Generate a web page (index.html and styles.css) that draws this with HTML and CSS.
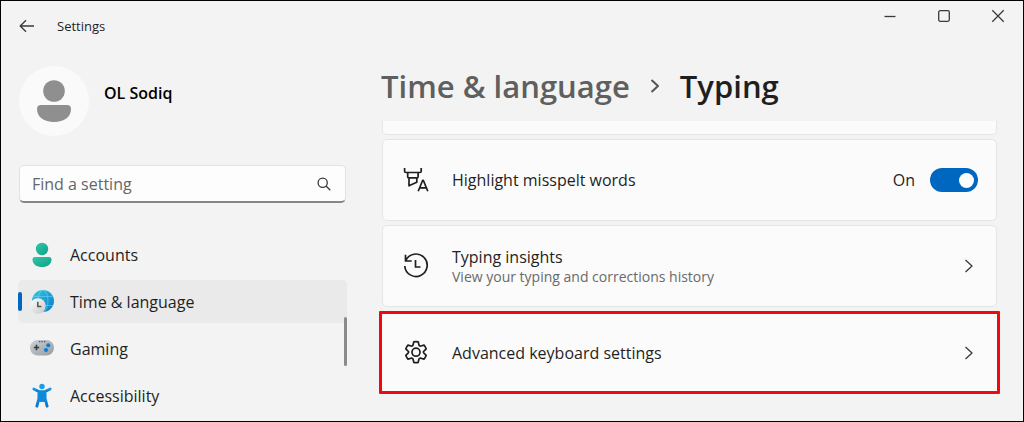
FILE: index.html
```html
<!DOCTYPE html>
<html lang="en">
<head>
<meta charset="utf-8">
<meta name="viewport" content="width=device-width, initial-scale=1">
<title>Settings</title>
<link rel="stylesheet" href="styles.css">
</head>
<body>
<div class="window">
  <header class="titlebar">
    <button class="icon-button back" aria-label="Back">
      <svg width="16" height="14" viewBox="0 0 16 14" class="line"><path d="M15 7H1.500M7 1.200 1.200 7 7 12.800"/></svg>
    </button>
    <span class="app-name">Settings</span>
    <div class="window-controls">
      <button class="icon-button" aria-label="Minimise"><svg width="14" height="14" viewBox="0 0 14 14" class="line"><path d="M1.500 7.500h11"/></svg></button>
      <button class="icon-button" aria-label="Maximise"><svg width="14" height="14" viewBox="0 0 14 14" class="line"><rect x="1.700" y="1.700" width="10.600" height="10.600" rx="1.500"/></svg></button>
      <button class="icon-button" aria-label="Close"><svg width="14" height="14" viewBox="0 0 14 14" class="line"><path d="m1.300 1.300 11.400 11.400M12.700 1.300 1.300 12.700"/></svg></button>
    </div>
  </header>

  <div class="body">
    <aside class="sidebar">
      <div class="profile">
        <span class="avatar">
          <svg width="34" height="42" viewBox="0 0 34 42" fill="#8f8f8f"><circle cx="17" cy="11" r="10.800"/><path d="M4 25h26q4 0 4 4c0 8-7 13-17 13S0 37 0 29q0-4 4-4z"/></svg>
        </span>
        <span class="user-name">OL Sodiq</span>
      </div>

      <div class="search">
        <input type="text" class="search-input" placeholder="Find a setting" aria-label="Find a setting">
        <svg width="14" height="14" viewBox="0 0 14 14" class="line"><circle cx="5.700" cy="5.700" r="4.600"/><path d="m9 9 4.300 4.300"/></svg>
      </div>

      <nav class="nav">
        <a class="nav-item" href="#accounts">
          <svg width="26" height="26" viewBox="0 0 26 26"><defs><linearGradient id="teal" x1="0" y1="0" x2="1" y2="1"><stop offset="0" stop-color="#2fc7ad"/><stop offset="1" stop-color="#12a085"/></linearGradient></defs><g fill="url(#teal)"><circle cx="13" cy="7" r="6.200"/><path d="M6 15h14q2.500 0 2.500 2.500C22.500 22.500 18 25 13 25S3.500 22.500 3.500 17.500Q3.500 15 6 15z"/></g></svg>
          <span>Accounts</span>
        </a>
        <a class="nav-item selected" href="#time" aria-current="page">
          <svg width="26" height="26" viewBox="0 0 26 26"><defs><linearGradient id="globe" x1="0" y1="0" x2="1" y2="1"><stop offset="0" stop-color="#39c9e2"/><stop offset="1" stop-color="#0878c6"/></linearGradient><linearGradient id="clock" x1="0" y1="0" x2="1" y2="1"><stop offset="0" stop-color="#ffffff"/><stop offset="1" stop-color="#c6c6c6"/></linearGradient></defs><circle cx="14" cy="12" r="11" fill="url(#globe)"/><g fill="none" stroke="#7be0ef" stroke-opacity=".6" stroke-width=".8"><ellipse cx="14" cy="12" rx="5" ry="11"/><path d="M4.500 7.500h19M4 16.500h20"/></g><circle cx="9" cy="17" r="7.800" fill="url(#clock)"/><path d="M8.800 12.800v4.700h3.600" fill="none" stroke="#555" stroke-width="1.500"/></svg>
          <span>Time &amp; language</span>
        </a>
        <a class="nav-item" href="#gaming">
          <svg width="26" height="26" viewBox="0 0 26 26"><defs><linearGradient id="pad" x1="0" y1="0" x2="1" y2="1"><stop offset="0" stop-color="#cdd2d7"/><stop offset="1" stop-color="#949ba3"/></linearGradient></defs><rect x="1" y="4" width="24" height="15.500" rx="7.700" fill="url(#pad)"/><path d="M7.500 8.800v5.400M4.800 11.500h5.400" stroke="#363b40" stroke-width="1.600"/><circle cx="19.300" cy="9.300" r="2" fill="#0c79d4"/><circle cx="17" cy="14" r="2" fill="#0c79d4"/><path d="M10 5.700h1.300M12.500 5.700h1.300M15 5.700h1.300" stroke="#4c5259" stroke-width="1.200"/></svg>
          <span>Gaming</span>
        </a>
        <a class="nav-item" href="#accessibility">
          <svg width="26" height="26" viewBox="0 0 26 26"><defs><linearGradient id="person" x1="0" y1="0" x2="0" y2="1"><stop offset="0" stop-color="#1c9be6"/><stop offset="1" stop-color="#0877cf"/></linearGradient></defs><g fill="none" stroke="url(#person)" stroke-linecap="round" stroke-linejoin="round"><path d="M4.800 6 10 8.600h6L21.200 6" stroke-width="2.800"/><path d="M9.900 10h6.200v5.500l2 7.700M9.900 10v5.500l-2 7.700" stroke-width="2.900"/></g><path d="M9 8h8v8l-1.500 3h-5L9 16z" fill="#1189db"/><path d="m13 18.500-2.600 6h5.200z" fill="#f3f3f3"/><circle cx="13" cy="3.500" r="2.700" fill="#1c9be6"/></svg>
          <span>Accessibility</span>
        </a>
        <span class="scroll-thumb"></span>
      </nav>
    </aside>

    <main class="content">
      <h1 class="breadcrumb">
        <a class="crumb" href="#time">Time &amp; language</a>
        <svg width="10" height="14" viewBox="0 0 10 14" class="line thick"><path d="m1.500 1 6.500 6-6.500 6"/></svg>
        <span>Typing</span>
      </h1>

      <div class="cards">
        <div class="card clipped"></div>
        <div class="card">
          <svg width="26" height="26" viewBox="0 0 26 26" class="line glyph"><path d="M1.600 1v3.200q0 1.300 1.300 1.300h14q1.300 0 1.300-1.300V1M4.700 5.500v4.300q0 1 1 1h8.400q1 0 1-1V5.500M6 10.800v8l7.800-3.600v-4.400M15.200 24.300l4.500-11h.6l4.500 11M16.800 20.800h6.400"/></svg>
          <label class="card-title" for="misspelt">Highlight misspelt words</label>
          <span class="state">On</span>
          <input type="checkbox" role="switch" id="misspelt" class="toggle" checked>
        </div>
        <button class="card">
          <svg width="26" height="26" viewBox="0 0 26 26" class="line glyph"><path d="M2.500 1.800V8h6.200M2.700 7.800A11.200 11.200 0 1 1 1.800 13M12.500 7v7h5"/></svg>
          <span class="card-text"><span class="card-title">Typing insights</span><span class="card-note">View your typing and corrections history</span></span>
          <svg width="10" height="14" viewBox="0 0 10 14" class="line chevron"><path d="m1.500 1 6.500 6-6.500 6"/></svg>
        </button>
        <button class="card highlighted">
          <svg width="26" height="26" viewBox="0 0 26 26" class="line glyph"><path d="M10.800 1.800q2.200-.5 4.400 0l.7 3.100q.5 1.400 2 1.100l3.100-.9q1.500 1.600 2.200 3.800l-2.300 2.200q-1.100 1 0 2l2.300 2.200q-.7 2.200-2.200 3.800l-3.100-.9q-1.500-.3-2 1.100l-.7 3.100q-2.200.5-4.400 0l-.7-3.100q-.5-1.400-2-1.100l-3.100.9q-1.500-1.600-2.200-3.800l2.300-2.200q1.100-1 0-2L2.800 8.900q.7-2.200 2.200-3.800l3.100.9q1.500.3 2-1.100z"/><circle cx="13" cy="12.200" r="4"/></svg>
          <span class="card-title">Advanced keyboard settings</span>
          <svg width="10" height="14" viewBox="0 0 10 14" class="line chevron"><path d="m1.500 1 6.500 6-6.500 6"/></svg>
        </button>
      </div>
    </main>
  </div>
</div>
</body>
</html>
```

FILE: styles.css
```css
* { box-sizing: border-box; }

body {
  margin: 0;
  background: #f3f3f3;
  color: #1f1f1f;
  font-family: "Open Sans", "Noto Sans", sans-serif;
  font-size: 16px;
  line-height: 22px;
}

a { color: inherit; text-decoration: none; }

button, input { font: inherit; color: inherit; }

.window {
  min-height: 100vh;
  border: 1px solid #000;
  display: flex;
  flex-direction: column;
}

.line {
  fill: none;
  stroke: #3a3a3a;
  stroke-width: 1.3;
  stroke-linejoin: round;
  flex: none;
}
.line.thick { stroke: #555; stroke-width: 2; }
.line.glyph { stroke: #1f1f1f; stroke-width: 1.7; }

.titlebar {
  display: flex;
  align-items: center;
  padding: 0 8px 0 18px;
  height: 50px;
}
.app-name { font-size: 13px; margin-left: 22px; }
.icon-button {
  display: flex;
  align-items: center;
  justify-content: center;
  padding: 0;
  border: 0;
  background: none;
}
.window-controls {
  display: flex;
  gap: 20px;
  margin-left: auto;
  align-self: flex-start;
}
.window-controls .icon-button { width: 34px; height: 30px; }

.body { display: flex; gap: 34px; padding: 0 26px 0 17px; }

.sidebar { flex: 0 0 329px; padding-top: 15px; }

.profile { display: flex; gap: 15px; padding-left: 1px; }
.avatar {
  width: 70px;
  height: 70px;
  border-radius: 50%;
  background: #fafafa;
  display: flex;
  align-items: center;
  justify-content: center;
}
.user-name { font-weight: 600; font-size: 16px; color: #000; padding-top: 16px; }

.search {
  display: flex;
  align-items: center;
  margin: 29px 1px 0;
  height: 38px;
  padding: 0 14px 0 12px;
  background: #fdfdfd;
  border: 1px solid #e2e2e2;
  border-bottom: 2px solid #868686;
  border-radius: 5px;
}
.search-input {
  flex: 1;
  min-width: 0;
  padding: 0;
  border: 0;
  outline: 0;
  background: none;
}
.search-input::placeholder { color: #666; opacity: 1; }

.nav {
  position: relative;
  display: flex;
  flex-direction: column;
  gap: 4px;
  margin-top: 30px;
}
.nav-item {
  position: relative;
  display: flex;
  align-items: center;
  gap: 15px;
  height: 43px;
  padding-left: 11px;
  border-radius: 5px;
}
.nav-item.selected { background: #eaeaea; }
.nav-item.selected::before {
  content: "";
  position: absolute;
  left: 0;
  top: 12px;
  width: 4px;
  height: 19px;
  border-radius: 2px;
  background: #0067c0;
}
.scroll-thumb {
  position: absolute;
  right: 0;
  top: 84px;
  width: 3px;
  height: 49px;
  border-radius: 2px;
  background: #8a8a8a;
}

.content { flex: 1; min-width: 0; }

.breadcrumb {
  display: flex;
  align-items: center;
  gap: 20px;
  margin: 0;
  padding-top: 13px;
  font-size: 31px;
  line-height: 44px;
  font-weight: 600;
}
.crumb { color: #5f5f5f; }

.cards {
  display: flex;
  flex-direction: column;
  gap: 4px;
  margin: 13px 0 0 1px;
}
.card {
  display: flex;
  align-items: center;
  height: 82px;
  padding: 0 18px 0 20px;
  background: #fbfbfb;
  border: 1px solid #e5e5e5;
  border-radius: 5px;
  text-align: left;
}
.card.clipped {
  height: 14px;
  border-top: 0;
  border-radius: 0 0 5px 5px;
}
.card.highlighted {
  height: 83px;
  margin: 0 -3px;
  border: 3px solid #f00a0e;
  border-radius: 1px;
  padding: 0 19px 0 21px;
}
.glyph { margin-right: 23px; }
.card-text { display: flex; flex-direction: column; }
.card-note { font-size: 14px; line-height: 18px; color: #6a6a6a; }
.chevron { margin: 0 4px 0 auto; }
.state { margin-left: auto; }

.toggle {
  appearance: none;
  display: flex;
  align-items: center;
  justify-content: flex-end;
  width: 48px;
  height: 24px;
  margin: 0 0 0 15px;
  padding: 0 4px;
  border-radius: 12px;
  background: #0067c0;
}
.toggle::before {
  content: "";
  width: 15px;
  height: 15px;
  border-radius: 50%;
  background: #fff;
}
.toggle:not(:checked) { justify-content: flex-start; background: #8a8a8a; }
```
